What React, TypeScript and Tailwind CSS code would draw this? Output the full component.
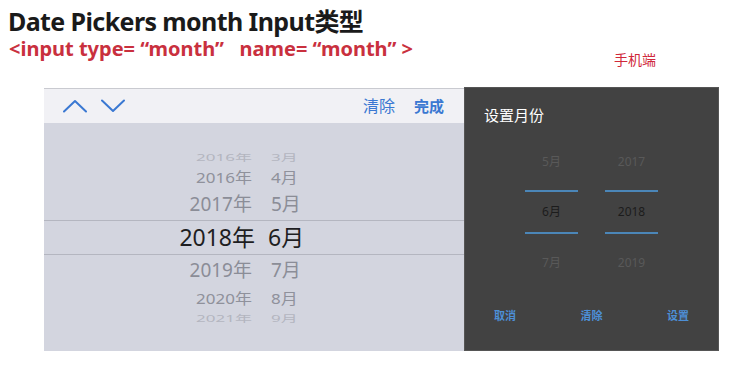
const cjk = { fontFamily: '"Noto Sans", "Noto Sans CJK SC", sans-serif' };

type Row = { year: string; month: string; h: string; cls: string };

const rows: Row[] = [
  { year: '2016年', month: '3月', h: 'h-[16px]', cls: 'text-[17px] text-[#b3b5bf] scale-y-[0.55]' },
  { year: '2016年', month: '4月', h: 'h-[24px]', cls: 'text-[17px] text-[#8f919b] scale-y-[0.85]' },
  { year: '2017年', month: '5月', h: 'h-[31px]', cls: 'text-[19px] text-[#8b8d97]' },
];
const rowsBelow: Row[] = [
  { year: '2019年', month: '7月', h: 'h-[31px]', cls: 'text-[19px] text-[#8b8d97]' },
  { year: '2020年', month: '8月', h: 'h-[24px]', cls: 'text-[17px] text-[#8f919b] scale-y-[0.85]' },
  { year: '2021年', month: '9月', h: 'h-[16px]', cls: 'text-[17px] text-[#b3b5bf] scale-y-[0.55]' },
];

function WheelRow({ r }: { r: Row }) {
  return (
    <div className={`${r.h} flex items-center`}>
      <div className={`flex w-full ${r.cls}`}>
        <span className="w-[208px] text-right leading-none">{r.year}</span>
        <span className="pl-[19px] leading-none">{r.month}</span>
      </div>
    </div>
  );
}

function Chevron({ up }: { up?: boolean }) {
  return (
    <svg width="24" height="14" viewBox="0 0 24 14" fill="none" stroke="#3a78d2" strokeWidth="2" strokeLinecap="round" strokeLinejoin="round">
      {up ? <polyline points="1,12.5 12,2 23,12.5" /> : <polyline points="1,1.5 12,12 23,1.5" />}
    </svg>
  );
}

function IosPicker() {
  return (
    <div className="w-[420px] h-[263px] flex flex-col bg-[#d3d5df] border-t border-[#c9cad0]" style={cjk}>
      {/* toolbar */}
      <div className="h-[34px] bg-[#f1f1f5] flex items-center pl-[19px] pr-[20px] text-[#3a78d2]">
        <Chevron up />
        <div className="ml-[14px]">
          <Chevron />
        </div>
        <div className="flex-1" />
        <span className="text-[16px]">清除</span>
        <span className="text-[15px] font-bold ml-[19px]">完成</span>
      </div>
      {/* wheel */}
      <div className="flex-1 flex flex-col pt-[26px]">
        {rows.map((r, i) => (
          <WheelRow key={i} r={r} />
        ))}
        <div className="h-[35px] flex items-center border-y border-[#b4b6c0]">
          <div className="flex w-full text-[23px] text-[#1e1e22]">
            <span className="w-[211px] text-right leading-none">2018年</span>
            <span className="pl-[13px] leading-none">6月</span>
          </div>
        </div>
        {rowsBelow.map((r, i) => (
          <WheelRow key={i} r={r} />
        ))}
      </div>
    </div>
  );
}

function AndroidPicker() {
  return (
    <div className="w-[255px] h-[264px] bg-[#424242] flex flex-col border border-[#555]" style={cjk}>
      <div className="pl-[19px] pt-[20px] text-[15px] text-white leading-none h-[40px]">设置月份</div>
      <div className="flex pl-[60px] gap-[27px]">
        {[
          ['5月', '6月', '7月'],
          ['2017', '2018', '2019'],
        ].map((col, i) => (
          <div key={i} className="w-[53px] flex flex-col items-center text-[12px]">
            <div className="h-[62px] pt-[28px] text-[#595959] leading-none">{col[0]}</div>
            <div className="w-full h-[2px] bg-[#4b86b8]" />
            <div className="h-[40px] flex items-center text-[#1c1c1c]">{col[1]}</div>
            <div className="w-full h-[2px] bg-[#4b86b8]" />
            <div className="h-[58px] flex items-center text-[#595959]">{col[2]}</div>
          </div>
        ))}
      </div>
      <div className="flex justify-between px-[29px] pt-[16px] text-[11px] font-bold text-[#4d8fd6]">
        <span>取消</span>
        <span>清除</span>
        <span>设置</span>
      </div>
    </div>
  );
}

export default function App() {
  return (
    <div className="w-[729px] h-[365px] bg-white relative overflow-hidden" style={cjk}>
      <div className="pl-[8px] pt-[6px]">
        <h1 className="text-[25px] font-bold text-[#1a1a1a] leading-[30px] tracking-[-0.6px]">
          Date Pickers month Input类型
        </h1>
        <p className="text-[20px] font-bold text-[#c9303e] leading-[24px] mt-[1px] pl-[1px] whitespace-pre">
          {'<input type= “month”   name= “month” >'}
        </p>
      </div>
      <div className="absolute left-[614px] top-[49px] text-[14px] text-[#d0283a]">手机端</div>
      <div className="flex items-end pl-[44px] pt-[26px]">
        <IosPicker />
        <AndroidPicker />
      </div>
    </div>
  );
}
